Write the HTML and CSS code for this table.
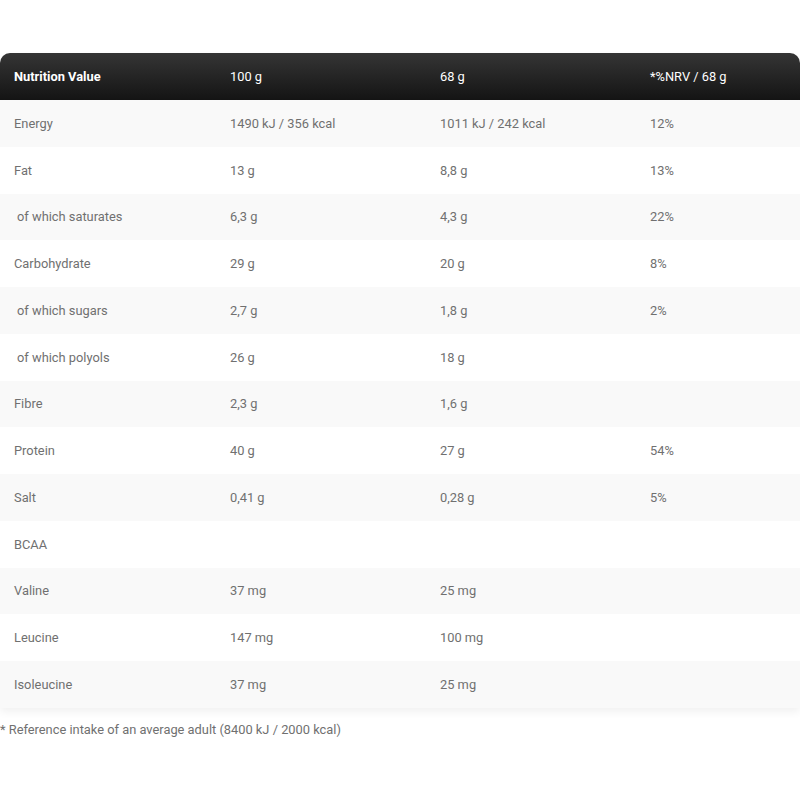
FILE: index.html
```html
<!DOCTYPE html>
<html>
<head>
<meta charset="utf-8">
<link rel="stylesheet" href="styles.css">
</head>
<body>
<div class="page">
  <div class="table">
    <div class="row head"><div>Nutrition Value</div><div>100 g</div><div>68 g</div><div>*%NRV / 68 g</div></div>
    <div class="row odd"><div>Energy</div><div>1490 kJ / 356 kcal</div><div>1011 kJ / 242 kcal</div><div>12%</div></div>
    <div class="row"><div>Fat</div><div>13 g</div><div>8,8 g</div><div>13%</div></div>
    <div class="row odd"><div class="sub">of which saturates</div><div>6,3 g</div><div>4,3 g</div><div>22%</div></div>
    <div class="row"><div>Carbohydrate</div><div>29 g</div><div>20 g</div><div>8%</div></div>
    <div class="row odd"><div class="sub">of which sugars</div><div>2,7 g</div><div>1,8 g</div><div>2%</div></div>
    <div class="row"><div class="sub">of which polyols</div><div>26 g</div><div>18 g</div><div></div></div>
    <div class="row odd"><div>Fibre</div><div>2,3 g</div><div>1,6 g</div><div></div></div>
    <div class="row"><div>Protein</div><div>40 g</div><div>27 g</div><div>54%</div></div>
    <div class="row odd"><div>Salt</div><div>0,41 g</div><div>0,28 g</div><div>5%</div></div>
    <div class="row"><div>BCAA</div><div></div><div></div><div></div></div>
    <div class="row odd"><div>Valine</div><div>37 mg</div><div>25 mg</div><div></div></div>
    <div class="row"><div>Leucine</div><div>147 mg</div><div>100 mg</div><div></div></div>
    <div class="row odd"><div>Isoleucine</div><div>37 mg</div><div>25 mg</div><div></div></div>
  </div>
  <p class="note">* Reference intake of an average adult (8400 kJ / 2000 kcal)</p>
</div>
</body>
</html>
```
FILE: styles.css
```css
html, body {
  margin: 0;
  padding: 0;
  background: #fff;
}
.page {
  padding-top: 53px;
  font-family: Roboto, "Liberation Sans", sans-serif;
  font-size: 12.85px;
  color: #707070;
}
.table {
  border-radius: 10px 10px 0 0;
  overflow: hidden;
  box-shadow: 0 4px 8px rgba(0,0,0,0.06);
}
.row {
  display: grid;
  grid-template-columns: 216px 210px 210px 1fr;
  height: 46.75px;
  align-items: center;
  background: #fff;
}
.row > div {
  padding-left: 14px;
}
.row.odd {
  background: #f9f9f9;
}
.row.head {
  height: 47px;
  background: linear-gradient(#353535, #141414);
  color: #fff;
}
.row.head > div:first-child {
  font-weight: bold;
}
.sub {
  text-indent: 3px;
}
.note {
  margin: 14px 0 0 0;
  padding-left: 0;
  line-height: 16px;
}
```
